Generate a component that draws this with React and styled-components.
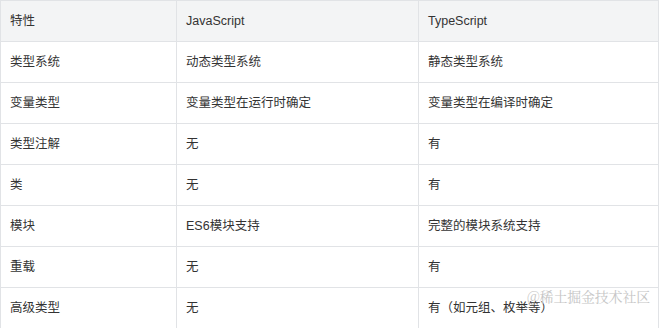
import styled, { createGlobalStyle } from "styled-components";

const GlobalStyle = createGlobalStyle`
  html, body {
    margin: 0;
    padding: 0;
    background: #ffffff;
  }
  body {
    font-family: "Liberation Sans", "Noto Sans CJK SC", sans-serif;
  }
`;

const Page = styled.div`
  position: relative;
  width: 659px;
  height: 328px;
  overflow: hidden;
`;

const Table = styled.table`
  width: 658px;
  border-collapse: collapse;
  table-layout: fixed;
  font-size: 12.5px;
  color: #333333;
`;

const HeadRow = styled.tr`
  background: #f3f4f5;
`;

const Row = styled.tr`
  background: #ffffff;
`;

const Cell = styled.td`
  height: 41px;
  padding: 0 9px;
  border: 1px solid #e1e3e6;
  text-align: left;
  vertical-align: middle;
  white-space: nowrap;
  line-height: 16px;
  box-sizing: border-box;
`;

const HeadCell = styled(Cell).attrs({ as: "th" })`
  font-weight: normal;
`;

const Watermark = styled.div`
  position: absolute;
  right: 9px;
  bottom: 22px;
  font-family: "Noto Serif CJK SC", "Liberation Serif", serif;
  font-size: 14px;
  letter-spacing: -0.2px;
  color: #c6c6c6;
  text-shadow: 0 0 1px rgba(255, 255, 255, 0.8);
`;

const rows = [
  ["类型系统", "动态类型系统", "静态类型系统"],
  ["变量类型", "变量类型在运行时确定", "变量类型在编译时确定"],
  ["类型注解", "无", "有"],
  ["类", "无", "有"],
  ["模块", "ES6模块支持", "完整的模块系统支持"],
  ["重载", "无", "有"],
  ["高级类型", "无", "有（如元组、枚举等）"],
];

export default function App() {
  return (
    <Page>
      <GlobalStyle />
      <Table>
        <colgroup>
          <col style={{ width: 176 }} />
          <col style={{ width: 242 }} />
          <col style={{ width: 240 }} />
        </colgroup>
        <thead>
          <HeadRow>
            <HeadCell>特性</HeadCell>
            <HeadCell>JavaScript</HeadCell>
            <HeadCell>TypeScript</HeadCell>
          </HeadRow>
        </thead>
        <tbody>
          {rows.map((r) => (
            <Row key={r[0]}>
              {r.map((c, i) => (
                <Cell key={i}>{c}</Cell>
              ))}
            </Row>
          ))}
        </tbody>
      </Table>
      <Watermark>@稀土掘金技术社区</Watermark>
    </Page>
  );
}
